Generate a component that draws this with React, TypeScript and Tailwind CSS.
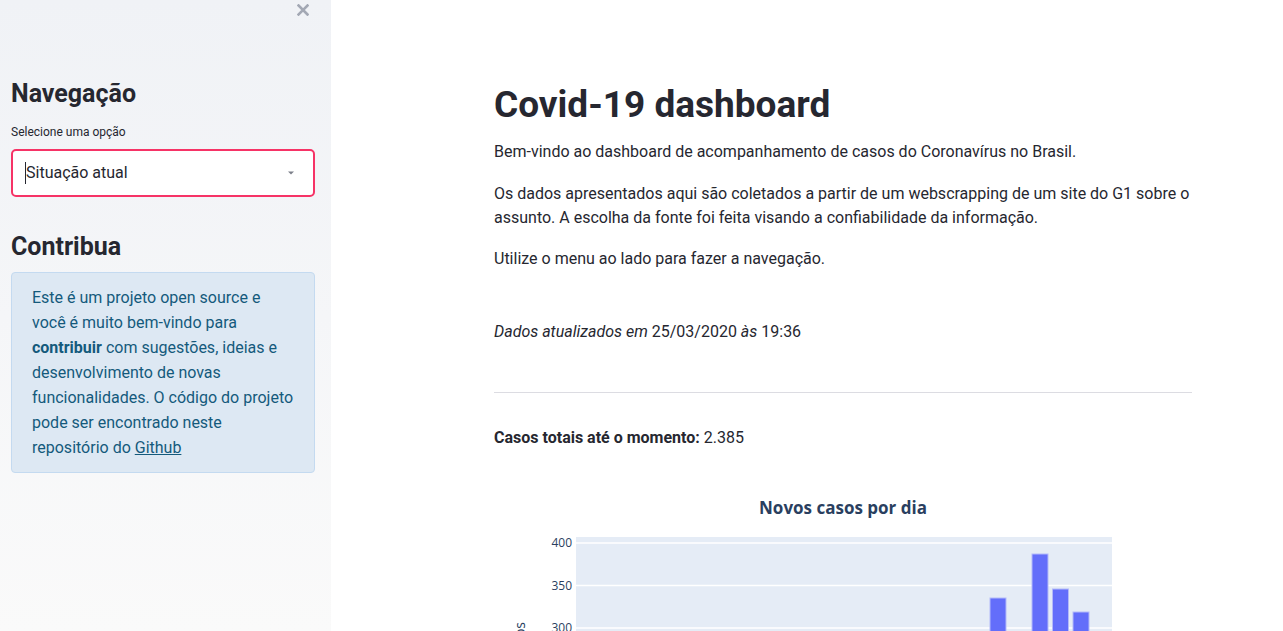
const font = { fontFamily: 'Roboto, "Liberation Sans", sans-serif' };
const plotFont = '"Open Sans", "Liberation Sans", sans-serif';

// y-axis ticks of the "Novos casos por dia" chart (svg coords)
const ticks = [
  { label: '400', y: 73 },
  { label: '350', y: 115.5 },
  { label: '300', y: 158 },
];

const bars = [
  { x: 504, top: 128 },
  { x: 525, top: 175 },
  { x: 546, top: 84 },
  { x: 566.5, top: 119 },
  { x: 587, top: 142 },
];

const CasesChart = () => (
  <svg width="698" height="200" viewBox="0 0 698 200" className="mt-[20px] block">
    <text x="349" y="44" textAnchor="middle" fill="#2a3f5f" fontSize="17" fontWeight="700" fontFamily={plotFont}>
      Novos casos por dia
    </text>
    <rect x="82" y="67" width="536" height="200" fill="#e5ecf6" />
    {ticks.map((t) => (
      <g key={t.label}>
        <line x1="82" x2="618" y1={t.y} y2={t.y} stroke="#ffffff" strokeWidth="1.5" />
        <text x="78" y={t.y + 4} textAnchor="end" fill="#2a3f5f" fontSize="12" fontFamily={plotFont}>
          {t.label}
        </text>
      </g>
    ))}
    {bars.map((b) => (
      <rect
        key={b.x}
        x={b.x - 8}
        y={b.top}
        width="16"
        height={260 - b.top}
        fill="#636efa"
        stroke="#b4baf9"
        strokeWidth="1"
      />
    ))}
    <text transform="translate(31 152) rotate(-90)" textAnchor="end" fill="#2a3f5f" fontSize="14" fontFamily={plotFont}>
      Casos
    </text>
  </svg>
);

export default function App() {
  return (
    <div className="flex h-screen overflow-hidden bg-white text-[#262730]" style={font}>
      <aside className="w-[331px] shrink-0 bg-gradient-to-b from-[#f0f2f6] to-[#fafafa] pl-[11px] pr-[16px]">
        <div className="flex justify-end pr-[6px] pt-[4px]">
          <svg width="12" height="12" viewBox="0 0 12 12" aria-label="Fechar">
            <path d="M1.5 1.5l9 9M10.5 1.5l-9 9" stroke="#a3a8b4" strokeWidth="2.6" strokeLinecap="square" />
          </svg>
        </div>

        <h2 className="mt-[63px] text-[25px] font-bold leading-[30px]">Navegação</h2>
        <p className="mt-[15px] text-[12px] leading-[16px]">Selecione uma opção</p>
        <div className="mt-[9px] flex h-[48px] items-center rounded-[5px] border-2 border-[#f63366] bg-white pl-[12px] pr-[17px]">
          <span className="h-[22px] w-px bg-[#262730]" />
          <span className="flex-1 text-[16px]">Situação atual</span>
          <svg width="10" height="6" viewBox="0 0 10 6">
            <path d="M2 1.5h6L5 4.5z" fill="#7d808a" />
          </svg>
        </div>

        <h2 className="mt-[35px] text-[25px] font-bold leading-[30px]">Contribua</h2>
        <div className="mt-[10px] rounded-[4px] border border-[#c4daf0] bg-[#dde8f3] py-[12px] pl-[20px] pr-[14px] text-[16px] leading-[25px] text-[#145a7c]">
          Este é um projeto open source e<br />
          você é muito bem-vindo para<br />
          <strong className="font-bold">contribuir</strong> com sugestões, ideias e<br />
          desenvolvimento de novas<br />
          funcionalidades. O código do projeto<br />
          pode ser encontrado neste<br />
          repositório do{' '}
          <a className="underline" href="#">
            Github
          </a>
        </div>
      </aside>

      <main className="flex-1 overflow-hidden">
        <div className="ml-[163px] w-[698px] pt-[81px]">
          <h1 className="text-[37px] font-bold leading-[48px]">Covid-19 dashboard</h1>
          <p className="mt-[11px] text-[16px] leading-[24px]">
            Bem-vindo ao dashboard de acompanhamento de casos do Coronavírus no Brasil.
          </p>
          <p className="mt-[18px] text-[16px] leading-[24px]">
            Os dados apresentados aqui são coletados a partir de um webscrapping de um site do G1 sobre o
            <br />
            assunto. A escolha da fonte foi feita visando a confiabilidade da informação.
          </p>
          <p className="mt-[17px] text-[16px] leading-[24px]">Utilize o menu ao lado para fazer a navegação.</p>

          <p className="mt-[49px] text-[16px] leading-[24px]">
            <em>Dados atualizados em</em> 25/03/2020 <em>às</em> 19:36
          </p>

          <hr className="mt-[48px] border-t border-[#dcdce2]" />

          <p className="mt-[33px] text-[16px] leading-[24px]">
            <strong className="font-bold">Casos totais até o momento:</strong> 2.385
          </p>

          <CasesChart />
        </div>
      </main>
    </div>
  );
}
